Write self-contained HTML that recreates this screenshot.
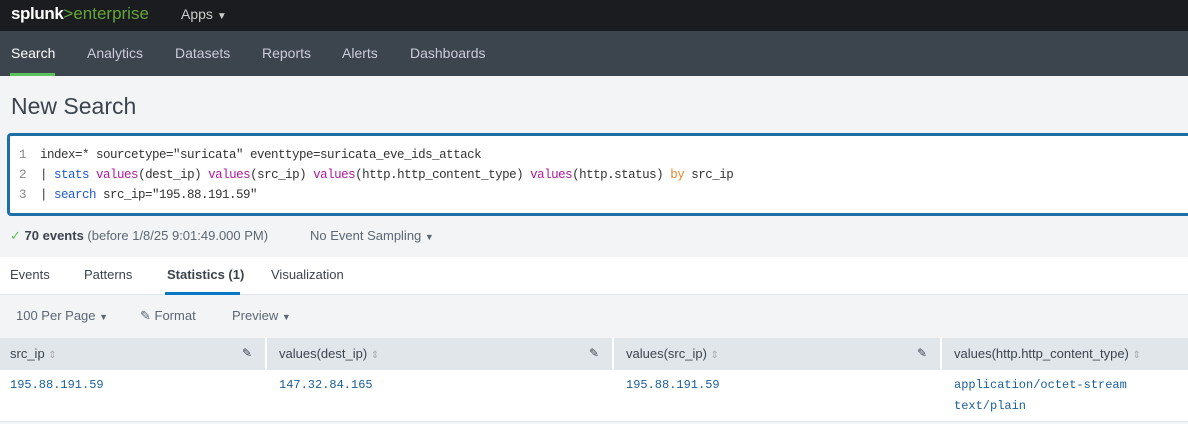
<!DOCTYPE html>
<html><head><style>
*{margin:0;padding:0;box-sizing:border-box}
body{width:1188px;height:424px;overflow:hidden;background:#f2f4f5;font-family:"Liberation Sans",sans-serif;position:relative}
.a{position:absolute;white-space:nowrap}
.mono{font-family:"Liberation Mono",monospace}
</style></head><body>
<div class="a" style="left:0;top:0;width:1188px;height:31px;background:#1a1c20"></div>
<div class="a" style="left:11px;top:4px;font-size:17px;font-weight:bold;color:#fff;letter-spacing:-0.4px">splunk<span style="color:#65a637;font-weight:normal;letter-spacing:0">&gt;enterprise</span></div>
<div class="a" style="left:181px;top:6px;font-size:14px;color:#ccc">Apps <span style="font-size:10px">&#9660;</span></div>
<div class="a" style="left:0;top:31px;width:1188px;height:45px;background:#3c444d"></div>
<div class="a" style="left:10px;top:73px;width:45px;height:3px;background:#5cc05c"></div>
<div class="a" style="top:45px;font-size:14px;color:#fff;left:11px">Search</div>
<div class="a" style="top:45px;font-size:14px;color:#ccd;left:87px">Analytics</div>
<div class="a" style="top:45px;font-size:14px;color:#ccd;left:175px">Datasets</div>
<div class="a" style="top:45px;font-size:14px;color:#ccd;left:262px">Reports</div>
<div class="a" style="top:45px;font-size:14px;color:#ccd;left:342px">Alerts</div>
<div class="a" style="top:45px;font-size:14px;color:#ccd;left:410px">Dashboards</div>
<div class="a" style="left:11px;top:93px;font-size:23px;color:#3c444d">New Search</div>
<div class="a" style="left:7px;top:133px;width:1200px;height:83px;background:#fff;border:3px solid #1d6fa5;border-radius:4px"></div>
<div class="a mono" style="left:19px;top:145px;font-size:12.5px;line-height:20px;color:#888">1<br>2<br>3</div>
<div class="a mono" style="left:40px;top:145px;font-size:12.5px;line-height:20px;color:#333;letter-spacing:-0.5px">index=* sourcetype="suricata" eventtype=suricata_eve_ids_attack<br>| <span style="color:#1f5ac6">stats</span> <span style="color:#b018a0">values</span>(dest_ip) <span style="color:#b018a0">values</span>(src_ip) <span style="color:#b018a0">values</span>(http.http_content_type) <span style="color:#b018a0">values</span>(http.status) <span style="color:#e8852c">by</span> src_ip<br>| <span style="color:#1f5ac6">search</span> src_ip="195.88.191.59"</div>
<div class="a" style="left:10px;top:228px;font-size:13px;color:#5c6773"><span style="color:#5cc05c">&#10003;</span> <b style="color:#3c444d">70 events</b> (before 1/8/25 9:01:49.000 PM)</div>
<div class="a" style="left:310px;top:228px;font-size:13px;color:#5c6773">No Event Sampling <span style="font-size:9px">&#9660;</span></div>
<div class="a" style="left:0;top:257px;width:1188px;height:38px;background:#fff;border-bottom:1px solid #e1e6eb"></div>
<div class="a" style="top:267px;left:10px;font-size:13px;color:#3c444d">Events</div>
<div class="a" style="top:267px;left:84px;font-size:13px;color:#3c444d">Patterns</div>
<div class="a" style="top:267px;left:167px;font-size:13px;color:#3c444d;font-weight:bold">Statistics (1)</div>
<div class="a" style="top:267px;left:271px;font-size:13px;color:#3c444d">Visualization</div>
<div class="a" style="left:165px;top:292px;width:75px;height:3px;background:#0877c5"></div>
<div class="a" style="top:308px;left:16px;font-size:13px;color:#5c6773">100 Per Page <span style="font-size:9px">&#9660;</span></div>
<div class="a" style="top:308px;left:140px;font-size:13px;color:#5c6773">&#9998; Format</div>
<div class="a" style="top:308px;left:232px;font-size:13px;color:#5c6773">Preview <span style="font-size:9px">&#9660;</span></div>
<div class="a" style="left:0;top:338px;width:1188px;height:32px;background:#e1e6eb"></div>
<div class="a" style="left:265px;top:338px;width:2px;height:32px;background:#fff"></div>
<div class="a" style="left:612px;top:338px;width:2px;height:32px;background:#fff"></div>
<div class="a" style="left:940px;top:338px;width:2px;height:32px;background:#fff"></div>
<div class="a" style="left:0;top:370px;width:1188px;height:52px;background:#fff;border-bottom:1px solid #e1e6eb"></div>
<div class="a" style="top:346px;left:10px;font-size:13px;color:#3c444d">src_ip <span style="color:#aaa;font-size:10px">&#8661;</span></div>
<div class="a" style="top:346px;left:242px;font-size:12px;color:#3c444d">&#9998;</div>
<div class="a" style="top:346px;left:279px;font-size:13px;color:#3c444d">values(dest_ip) <span style="color:#aaa;font-size:10px">&#8661;</span></div>
<div class="a" style="top:346px;left:589px;font-size:12px;color:#3c444d">&#9998;</div>
<div class="a" style="top:346px;left:626px;font-size:13px;color:#3c444d">values(src_ip) <span style="color:#aaa;font-size:10px">&#8661;</span></div>
<div class="a" style="top:346px;left:917px;font-size:12px;color:#3c444d">&#9998;</div>
<div class="a" style="top:346px;left:954px;font-size:13px;color:#3c444d">values(http.http_content_type) <span style="color:#aaa;font-size:10px">&#8661;</span></div>
<div class="a mono" style="top:375px;left:10px;font-size:12px;line-height:21px;color:#1a5f97">195.88.191.59</div>
<div class="a mono" style="top:375px;left:279px;font-size:12px;line-height:21px;color:#1a5f97">147.32.84.165</div>
<div class="a mono" style="top:375px;left:626px;font-size:12px;line-height:21px;color:#1a5f97">195.88.191.59</div>
<div class="a mono" style="top:375px;left:954px;font-size:12px;line-height:21px;color:#1a5f97">application/octet-stream<br>text/plain</div>
</body></html>
